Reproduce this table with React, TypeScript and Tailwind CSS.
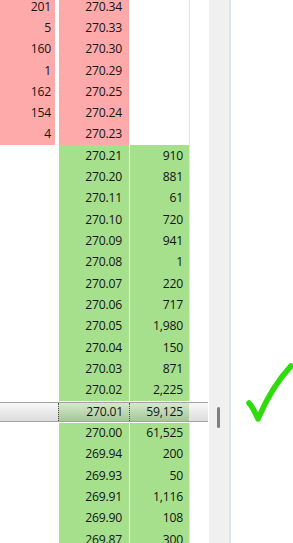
type AskRow = { qty: string; price: string };
type BidRow = { price: string; qty: string; selected?: boolean };

const asks: AskRow[] = [
  { qty: "201", price: "270.34" },
  { qty: "5", price: "270.33" },
  { qty: "160", price: "270.30" },
  { qty: "1", price: "270.29" },
  { qty: "162", price: "270.25" },
  { qty: "154", price: "270.24" },
  { qty: "4", price: "270.23" },
];

const bids: BidRow[] = [
  { price: "270.21", qty: "910" },
  { price: "270.20", qty: "881" },
  { price: "270.11", qty: "61" },
  { price: "270.10", qty: "720" },
  { price: "270.09", qty: "941" },
  { price: "270.08", qty: "1" },
  { price: "270.07", qty: "220" },
  { price: "270.06", qty: "717" },
  { price: "270.05", qty: "1,980" },
  { price: "270.04", qty: "150" },
  { price: "270.03", qty: "871" },
  { price: "270.02", qty: "2,225" },
  { price: "270.01", qty: "59,125", selected: true },
  { price: "270.00", qty: "61,525" },
  { price: "269.94", qty: "200" },
  { price: "269.93", qty: "50" },
  { price: "269.91", qty: "1,116" },
  { price: "269.90", qty: "108" },
  { price: "269.87", qty: "300" },
];

function AskLine({ row }: { row: AskRow }) {
  return (
    <div className="flex h-[21.333px] w-[209px]">
      <div className="flex w-[55px] items-center justify-end bg-[#ffaaaa] pr-[4px]">{row.qty}</div>
      <div className="w-[4px] bg-white" />
      <div className="flex w-[70px] items-center justify-end bg-[#ffaaaa] pr-[7px]">{row.price}</div>
      <div className="w-[1px] bg-white" />
      <div className="w-[59px] bg-white" />
      <div className="w-[1px] bg-[#e4e4e4]" />
      <div className="flex-1 bg-white" />
    </div>
  );
}

function BidLine({ row }: { row: BidRow }) {
  if (row.selected) {
    return (
      <div className="flex h-[21.333px] w-[209px] items-center">
        <div className="flex h-[20px] w-[208px] border-y border-[#a2a2a2]">
          <div className="w-[58px] bg-gradient-to-b from-[#f8f8f8] to-[#dcdcdc]" />
          <div className="flex w-[72px] items-center justify-end border-x border-dotted border-[#4a4a4a] bg-gradient-to-b from-[#d6e8ce] to-[#a4c896] pr-[6px]">
            {row.price}
          </div>
          <div className="flex w-[59px] items-center justify-end bg-gradient-to-b from-[#d6e8ce] to-[#a4c896] pr-[6px]">
            {row.qty}
          </div>
          <div className="flex-1 bg-gradient-to-b from-[#f8f8f8] to-[#dcdcdc]" />
        </div>
      </div>
    );
  }
  return (
    <div className="flex h-[21.333px] w-[209px]">
      <div className="w-[55px] bg-white" />
      <div className="w-[4px] bg-white" />
      <div className="flex w-[70px] items-center justify-end bg-[#a6e08c] pr-[7px]">{row.price}</div>
      <div className="w-[1px] bg-white" />
      <div className="flex w-[59px] items-center justify-end bg-[#a6e08c] pr-[6px]">{row.qty}</div>
      <div className="w-[1px] bg-[#e4e4e4]" />
      <div className="flex-1 bg-white" />
    </div>
  );
}

export default function App() {
  return (
    <div className="flex h-[543px] w-[293px] overflow-hidden bg-white font-['Open_Sans',sans-serif] text-[12.2px] tracking-[-0.2px] text-[#141414]">
      <div className="flex w-[209px] flex-col">
        <div className="mt-[-4px] flex flex-col">
          {asks.map((row) => (
            <AskLine key={row.price} row={row} />
          ))}
          {bids.map((row) => (
            <BidLine key={row.price} row={row} />
          ))}
        </div>
      </div>

      <div className="w-[20px] bg-[#f0f0f0] pl-[8px] pt-[407px]">
        <div className="h-[21px] w-[3px] rounded-full bg-[#7f7f7f]" />
      </div>
      <div className="w-[2px] bg-[#dbe4f0]" />

      <div className="flex-1">
        <svg width="62" height="543" viewBox="0 0 62 543" fill="none">
          <path
            d="M18 403 C21 406 24 412 27 419 C35 400 46 381 60 366"
            stroke="#2fdb0a"
            strokeWidth="5.5"
            strokeLinecap="round"
            strokeLinejoin="round"
          />
        </svg>
      </div>
    </div>
  );
}
